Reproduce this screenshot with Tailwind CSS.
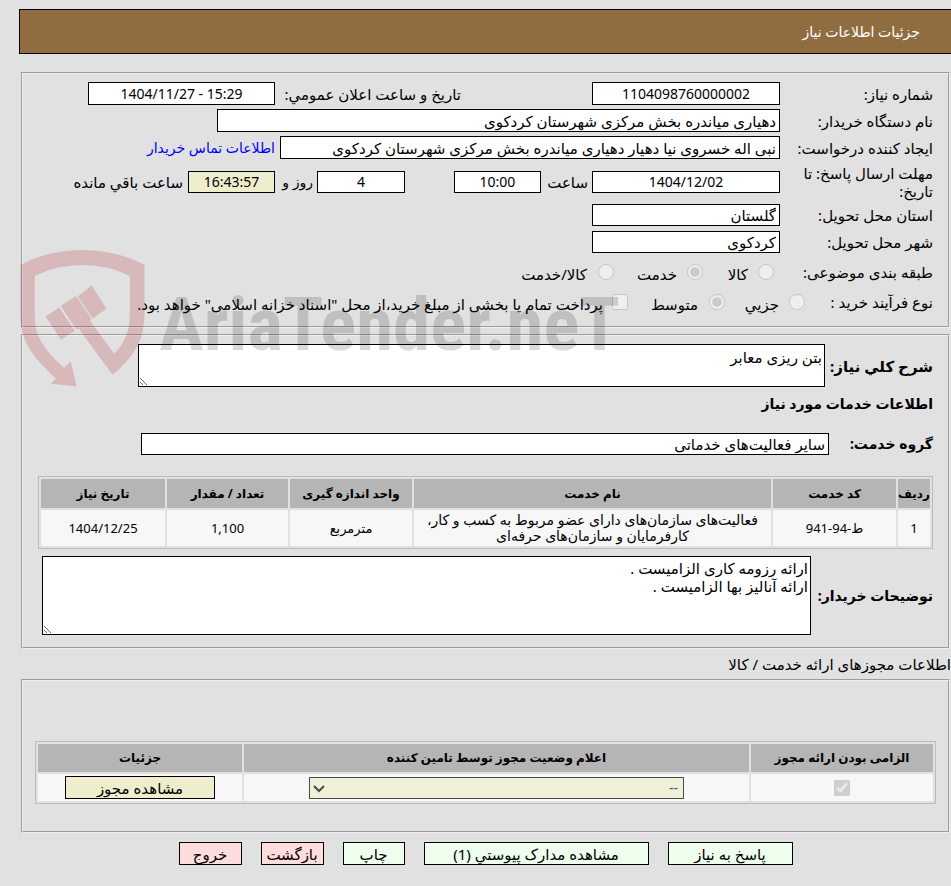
<!DOCTYPE html>
<html lang="fa" dir="rtl">
  <head>
    <meta charset="UTF-8" />
    <meta name="viewport" content="width=device-width, initial-scale=1.0" />
    <title>جزئیات اطلاعات نیاز</title>
    <script src="https://cdn.jsdelivr.net/npm/@tailwindcss/browser@4"></script>
  </head>
  <body class="relative min-h-screen bg-[#e1e1e1] pt-[9px] pb-5 font-['Noto_Sans','DejaVu_Sans',sans-serif] text-[15px] leading-[18px] text-black">
    <!-- Header -->
    <header class="ml-[19px] flex h-[45px] items-center border border-r-0 border-black bg-[#8f6d40] pr-[31px] text-[14px] text-white">
      <h1>جزئیات اطلاعات نیاز</h1>
    </header>

    <main class="mr-px ml-[21px]">
      <!-- Need summary -->
      <section class="mt-[18px] flex h-[256px] flex-col border-2 border-[#f0f0f0] px-[15px] pt-2 [border-style:groove]">
        <div class="mb-1 flex h-[23px] items-center">
          <label for="needNo" class="w-[153px] shrink-0">شماره نیاز:</label>
          <input id="needNo" type="text" readonly value="1104098760000002" class="h-[23px] w-[188px] border border-black bg-white text-center text-[14px]" />
          <label for="announceDate" class="mr-[131px] w-[186px] shrink-0 whitespace-nowrap">تاریخ و ساعت اعلان عمومي:</label>
          <input id="announceDate" type="text" readonly dir="ltr" value="1404/11/27 - 15:29" class="h-[23px] w-[187px] border border-black bg-white text-center text-[14px]" />
        </div>
        <div class="mb-1 flex h-[23px] items-center">
          <label for="buyerOrg" class="w-[153px] shrink-0">نام دستگاه خریدار:</label>
          <input id="buyerOrg" type="text" readonly value="دهیاری میاندره بخش مرکزی شهرستان کردکوی" class="h-[23px] w-[563px] border border-black bg-white px-[3px]" />
        </div>
        <div class="mb-1 flex h-[23px] items-center">
          <label for="creator" class="w-[153px] shrink-0">ایجاد کننده درخواست:</label>
          <input id="creator" type="text" readonly value="نبی اله خسروی نیا دهیار دهیاری میاندره بخش مرکزی شهرستان کردکوی" class="h-[23px] w-[500px] border border-black bg-white px-[3px]" />
          <a href="#" class="mr-[5px] text-[14px] whitespace-nowrap text-[#0000ff]">اطلاعات تماس خریدار</a>
        </div>
        <div class="mb-1 flex h-[37px] items-center">
          <label for="deadline" class="w-[153px] shrink-0 pl-3">مهلت ارسال پاسخ: تا<br />تاریخ:</label>
          <input id="deadline" type="text" readonly value="1404/12/02" class="h-[22px] w-[188px] border border-black bg-white text-center text-[14px]" />
          <label for="deadlineHour" class="w-[51px] shrink-0 pr-1">ساعت</label>
          <input id="deadlineHour" type="text" readonly value="10:00" class="h-[22px] w-[87px] border border-black bg-white text-center text-[14px]" />
          <input id="daysLeft" type="text" readonly value="4" class="mr-[49px] h-[22px] w-[88px] border border-black bg-white text-center text-[14px]" />
          <label for="daysLeft" class="w-[42px] shrink-0 pr-1 text-[14px] whitespace-nowrap">روز و</label>
          <input id="timeLeft" type="text" readonly value="16:43:57" class="h-[22px] w-[87px] border border-black bg-[#eeeecc] text-center text-[14px]" />
          <label for="timeLeft" class="mr-[5px] whitespace-nowrap">ساعت باقي مانده</label>
        </div>
        <div class="mb-[5px] flex h-[22px] items-center">
          <label for="province" class="w-[153px] shrink-0">استان محل تحویل:</label>
          <input id="province" type="text" readonly value="گلستان" class="h-[22px] w-[188px] border border-black bg-white px-[3px]" />
        </div>
        <div class="mb-[7px] flex h-[22px] items-center">
          <label for="city" class="w-[153px] shrink-0">شهر محل تحویل:</label>
          <input id="city" type="text" readonly value="کردکوی" class="h-[22px] w-[188px] border border-black bg-white px-[3px]" />
        </div>
        <div class="mb-[6px] flex h-6 items-center">
          <span class="w-[159px] shrink-0">طبقه بندی موضوعی:</span>
          <input id="catGoods" type="radio" name="category" disabled class="size-4" />
          <label for="catGoods" class="w-[55px] pt-1 pr-[10px]">کالا</label>
          <input id="catService" type="radio" name="category" disabled checked class="size-4" />
          <label for="catService" class="w-[73px] pt-1 pr-[10px]">خدمت</label>
          <input id="catBoth" type="radio" name="category" disabled class="size-4" />
          <label for="catBoth" class="pt-1 pr-[11px]">کالا/خدمت</label>
        </div>
        <div class="flex h-6 items-center">
          <span class="w-[128px] shrink-0">نوع فرآیند خرید :</span>
          <input id="procSmall" type="radio" name="process" disabled class="size-4" />
          <label for="procSmall" class="w-[64px] pt-1 pr-[10px]">جزیي</label>
          <input id="procMedium" type="radio" name="process" disabled checked class="size-4" />
          <label for="procMedium" class="w-[81px] pt-1 pr-[11px]">متوسط</label>
          <input id="treasury" type="checkbox" disabled class="size-4" />
          <label for="treasury" class="pt-1 pr-[9px] whitespace-nowrap">پرداخت تمام یا بخشی از مبلغ خرید،از محل "اسناد خزانه اسلامی" خواهد بود.</label>
        </div>
      </section>

      <!-- Description and services -->
      <section class="mt-[6px] border-2 border-[#f0f0f0] px-[15px] pt-2 pb-3 [border-style:groove]">
        <div class="flex items-center">
          <label for="summary" class="w-[108px] shrink-0 text-[15px] font-bold whitespace-nowrap">شرح کلي نیاز:</label>
          <textarea id="summary" readonly class="block h-[43px] w-[687px] border border-black bg-white px-[2px] py-[3px]">بتن ریزی معابر</textarea>
        </div>
        <h2 class="mt-2 mb-5 text-[14px] font-bold">اطلاعات خدمات مورد نیاز</h2>
        <div class="flex h-[22px] items-center">
          <label for="serviceGroup" class="w-[104px] shrink-0 text-[14px] font-bold">گروه خدمت:</label>
          <input id="serviceGroup" type="text" readonly value="سایر فعالیت‌های خدماتی" class="h-[22px] w-[688px] border border-black bg-white px-[3px]" />
        </div>

        <table class="mt-[21px] w-full table-fixed border-separate border-spacing-[2px] border border-[#bbbbbb] text-center text-[13px] leading-4">
          <thead class="bg-[#b5b5b5] text-[12px]">
            <tr class="h-[29px]">
              <th class="w-8">ردیف</th>
              <th class="w-[123px]">کد خدمت</th>
              <th>نام خدمت</th>
              <th class="w-[122px]">واحد اندازه گیری</th>
              <th class="w-[121px]">تعداد / مقدار</th>
              <th class="w-[124px]">تاریخ نیاز</th>
            </tr>
          </thead>
          <tbody class="bg-[#f7f7f7]">
            <tr class="h-9">
              <td>1</td>
              <td>ط-94-941</td>
              <td class="px-2 text-[14px] leading-4">فعالیت‌های سازمان‌های دارای عضو مربوط به کسب و کار، کارفرمایان و سازمان‌های حرفه‌ای</td>
              <td>مترمربع</td>
              <td>1,100</td>
              <td>1404/12/25</td>
            </tr>
          </tbody>
        </table>

        <div class="mt-[7px] flex items-center">
          <label for="buyerNotes" class="w-[122px] shrink-0 text-[14px] font-bold whitespace-nowrap">توضیحات خریدار:</label>
          <textarea id="buyerNotes" readonly class="block h-[79px] w-[769px] border border-black bg-white px-[2px] py-[2px]">ارائه رزومه کاری الزامیست .
ارائه آنالیز بها الزامیست .</textarea>
        </div>
      </section>

      <!-- Permits -->
      <h2 class="-mr-px flex h-[30px] items-center">اطلاعات مجوزهای ارائه خدمت / کالا</h2>
      <section class="border-2 border-[#f0f0f0] px-3 pt-[60px] pb-[27px] [border-style:groove]">
        <table class="w-full table-fixed border-separate border-spacing-[2px] border border-[#bbbbbb] text-center">
          <thead class="bg-[#b5b5b5] text-[12px]">
            <tr class="h-7">
              <th class="w-[182px]">الزامی بودن ارائه مجوز</th>
              <th>اعلام وضعیت مجوز توسط تامین کننده</th>
              <th class="w-[204px]">جزئیات</th>
            </tr>
          </thead>
          <tbody class="bg-[#f7f7f7]">
            <tr class="h-[27px]">
              <td><input type="checkbox" disabled checked aria-label="الزامی بودن ارائه مجوز" class="mx-auto block size-4" /></td>
              <td>
                <div class="relative mx-auto w-[375px]">
                  <select disabled aria-label="اعلام وضعیت مجوز" class="block h-[22px] w-full appearance-none border border-[#4a4a4a] bg-[#f0f0d9] pr-[5px] text-[14px] text-[#555555]">
                    <option>--</option>
                  </select>
                  <svg class="pointer-events-none absolute top-[8px] left-[4px] h-[8px] w-3" viewBox="0 0 12 8" fill="none" stroke="#4a4a4a" stroke-width="2">
                    <path d="M1 1l5 5 5-5" />
                  </svg>
                </div>
              </td>
              <td><button type="button" class="mx-auto block h-[23px] w-[150px] border border-black bg-[#eeeecc] pt-px">مشاهده مجوز</button></td>
            </tr>
          </tbody>
        </table>
      </section>

      <!-- Actions -->
      <div class="mt-[9px] flex justify-center gap-[19px]">
        <button type="button" class="h-[23px] w-[125px] border border-black bg-[#eeffee] pt-px">پاسخ به نیاز</button>
        <button type="button" class="h-[23px] w-[225px] border border-black bg-[#eeffee] pt-px">مشاهده مدارک پیوستي (1)</button>
        <button type="button" class="h-[23px] w-[62px] border border-black bg-[#eeffee] pt-px">چاپ</button>
        <button type="button" class="h-[23px] w-[63px] border border-black bg-[#ffdddd] pt-px whitespace-nowrap">بازگشت</button>
        <button type="button" class="h-[23px] w-[63px] border border-black bg-[#ffdddd] pt-px">خروج</button>
      </div>
    </main>

    <!-- Watermark -->
    <div dir="ltr" class="pointer-events-none absolute top-[250px] left-5 flex items-start gap-[14px]">
      <svg class="h-[137px] w-[125px] shrink-0" viewBox="60 150 375 412" fill="#b83c41" fill-opacity="0.24">
        <path d="M61 195Q145 150 247 150Q349 150 434 195V340C434 425 398 475 338 525L236 387L228 388L182 318L228 288L274 356L271 364L343 462C380 425 390 385 390 335V228Q325 195 247 195Q169 195 104 228V350C104 420 145 462 192 504L212 485L230 560L152 552L167 537C100 472 61 430 61 345Z" />
        <path d="M136 350L178 323L224 393L183 420Z" />
        <path d="M233 290L275 257L320 327L278 356Z" />
      </svg>
      <span class="mt-[28px] font-['Roboto_Condensed','Liberation_Sans',sans-serif] text-[75px] leading-[92px] font-bold text-black/15">AriaTender.neT</span>
    </div>
  </body>
</html>
